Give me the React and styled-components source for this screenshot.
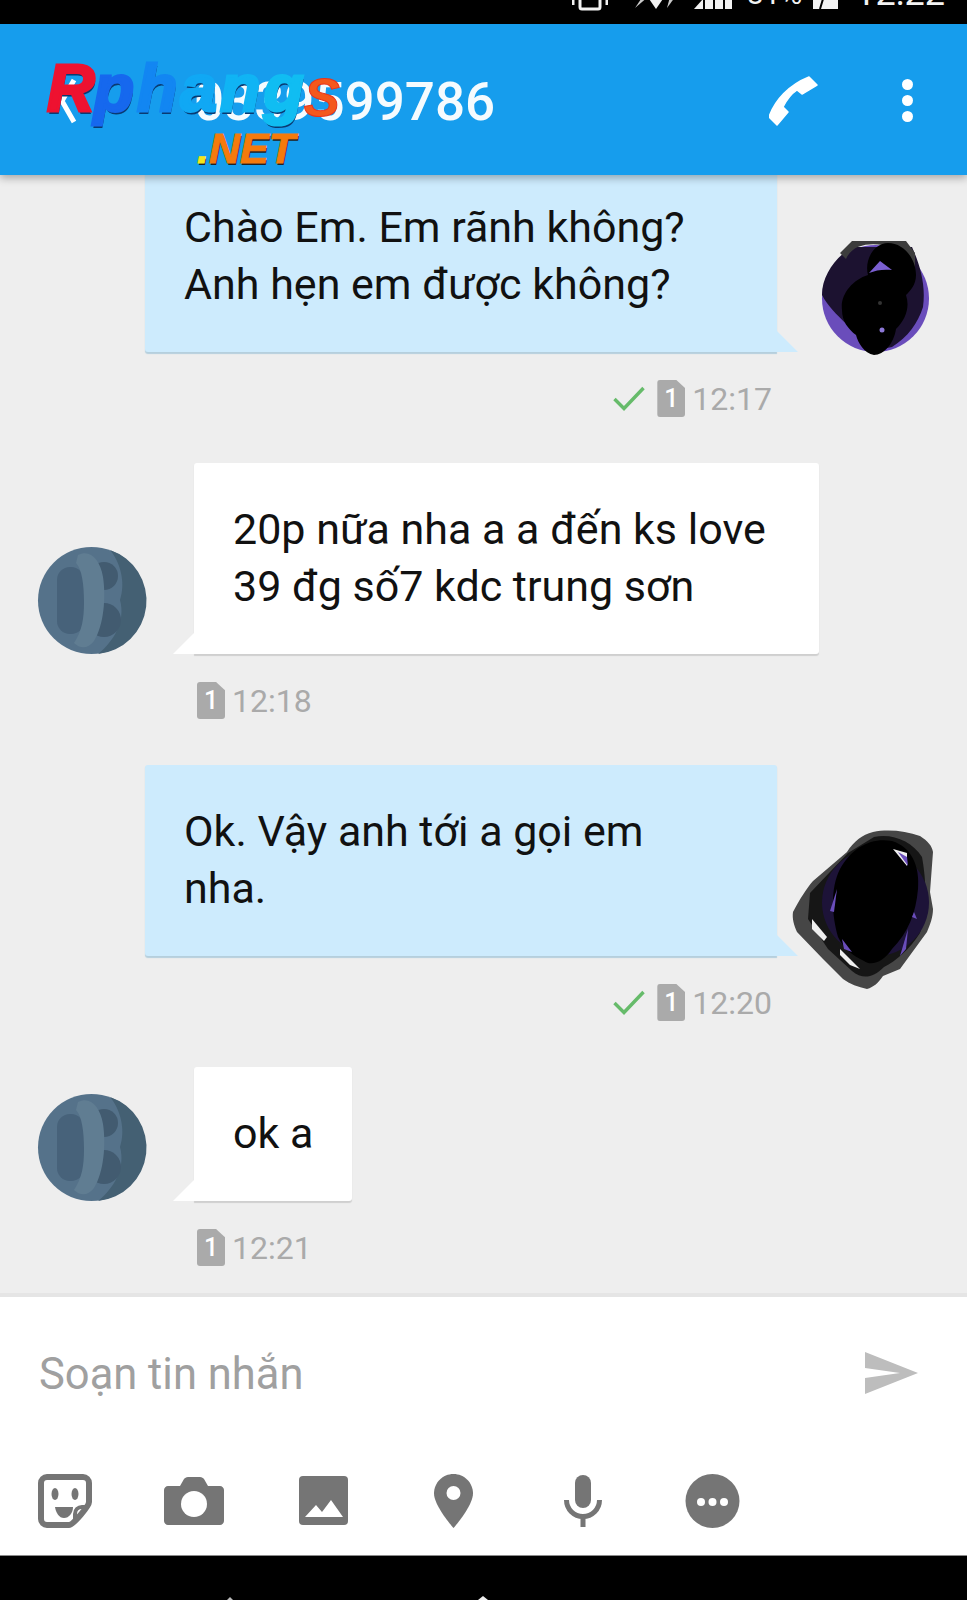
import React from 'react';
import styled, { createGlobalStyle } from 'styled-components';

const GlobalStyle = createGlobalStyle`
    html, body {
        margin: 0;
        padding: 0;
        background: #000;
    }
    * {
        box-sizing: border-box;
    }
`;

const Screen = styled.div`
    width: 967px;
    height: 1600px;
    display: flex;
    flex-direction: column;
    overflow: hidden;
    font-family: Roboto, "Noto Sans", sans-serif;
    background: #eeeeee;
`;

const StatusBar = styled.div`
    height: 24px;
    flex: none;
    background: #000;
    color: #f2f2f2;
    display: flex;
    justify-content: flex-end;
    align-items: flex-end;
    overflow: hidden;
    padding: 0 22px 13px 0;
`;

const StatusIcon = styled.svg`
    flex: none;
    margin-right: ${(p) => p.$gap}px;
`;

const StatusText = styled.span`
    font-size: ${(p) => p.$size}px;
    line-height: 1;
    margin-right: ${(p) => p.$gap || 0}px;
    margin-bottom: ${(p) => p.$drop || 0}px;
`;

const AppBar = styled.header`
    position: relative;
    z-index: 2;
    height: 151px;
    flex: none;
    display: flex;
    align-items: center;
    padding: 2px 54px 0 59px;
    background: #169ded;
    box-shadow: 0 3px 8px rgba(0, 0, 0, 0.3);
    color: #fff;
`;

const BackIcon = styled.svg`
    flex: none;
    margin-right: 116px;
`;

const Number = styled.h1`
    margin: 4px 0 0;
    flex: 1;
    font-size: 53px;
    font-weight: 500;
    line-height: 1;
    opacity: 0.96;
`;

const PhoneIcon = styled.svg`
    flex: none;
    margin-right: 83px;
`;

const Menu = styled.div`
    display: flex;
    flex-direction: column;
    gap: 5px;
`;

const Dot = styled.span`
    width: 11px;
    height: 11px;
    border-radius: 50%;
    background: #fff;
`;

const Logo = styled.div`
    position: absolute;
    left: 47px;
    top: 28px;
    display: flex;
    flex-direction: column;
    font-family: "Liberation Sans", Arial, sans-serif;
    font-weight: 700;
    font-style: italic;
`;

const LogoTop = styled.div`
    display: flex;
    align-items: baseline;
    font-size: 66px;
    line-height: 72px;
`;

const LogoLetter = styled.span`
    color: ${(p) => p.$color};
    -webkit-text-stroke: 3px ${(p) => p.$color};
    text-shadow: 1px 3px 0 #0a3a72;
    margin-right: ${(p) => p.$gap ?? 3}px;
`;

const LogoEnd = styled.span`
    color: #f4581c;
    font-size: 54px;
    margin-left: -3px;
    position: relative;
    top: 5px;
    -webkit-text-stroke: 1px #e8331c;
`;

const LogoNet = styled.div`
    margin: -2px 0 0 150px;
    font-size: 43px;
    line-height: 44px;
    color: #f57a0c;
    -webkit-text-stroke: 1px #f57a0c;
    text-shadow: 1px 2px 0 #222;
`;

const LogoDot = styled.span`
    color: #f4e61c;
    -webkit-text-stroke: 1px #f4e61c;
`;

const Chat = styled.main`
    flex: 1;
    min-height: 0;
    display: flex;
    flex-direction: column;
    justify-content: flex-end;
    overflow: hidden;
    padding-bottom: 27px;
`;

const Row = styled.div`
    flex: none;
    display: flex;
    align-items: flex-end;
    padding-left: ${(p) => (p.$mine ? 145 : 38)}px;
    gap: ${(p) => (p.$mine ? 45 : 49)}px;
`;

const Bubble = styled.div`
    position: relative;
    width: ${(p) => (p.$wide ? `${p.$wide}px` : 'auto')};
    padding: 38px 39px 39px;
    font-size: 43px;
    line-height: 57px;
    color: #111;
    background: ${(p) => (p.$mine ? '#cdebfd' : '#fff')};
    border-radius: ${(p) => (p.$mine ? '3px 3px 0 3px' : '3px 3px 3px 0')};
    box-shadow: 0 1.5px 1px ${(p) => (p.$mine ? '#b5cfdd' : '#cfcfcf')};

    &::after {
        content: '';
        position: absolute;
        bottom: 0;
        width: 21px;
        height: 21px;
        background: inherit;
        ${(p) =>
            p.$mine
                ? 'left: 100%; clip-path: polygon(0 0, 100% 100%, 0 100%);'
                : 'right: 100%; clip-path: polygon(100% 0, 0 100%, 100% 100%);'}
    }
`;

const AvatarSlot = styled.div`
    position: relative;
    width: 107px;
    height: 107px;
    flex: none;
`;

const AvatarArt = styled.svg`
    display: block;
    overflow: visible;
`;

const Meta = styled.div`
    flex: none;
    height: 37px;
    margin: 28px 0 46px;
    display: flex;
    align-items: center;
    justify-content: ${(p) => (p.$mine ? 'flex-end' : 'flex-start')};
    padding: ${(p) => (p.$mine ? '0 195px 0 0' : '0 0 0 197px')};
    color: #aaaaaa;
    font-size: 32px;

    &:last-child {
        margin-bottom: 0;
    }
`;

const Check = styled.svg`
    flex: none;
    margin-right: 12px;
`;

const SimBadge = styled.span`
    width: 28px;
    height: 37px;
    margin-right: 7px;
    display: flex;
    align-items: center;
    justify-content: center;
    font-size: 25px;
    font-weight: 500;
    color: #fff;
    background: #aaaaaa;
    border-radius: 3px;
    clip-path: polygon(0 0, 68% 0, 100% 22%, 100% 100%, 0 100%);
`;

const Composer = styled.footer`
    flex: none;
    background: #fff;
    border-top: 4px solid #e5e5e5;
`;

const InputRow = styled.div`
    height: 153px;
    display: flex;
    align-items: center;
    justify-content: space-between;
    padding: 2px 49px 0 39px;
`;

const Placeholder = styled.span`
    font-size: 43.5px;
    color: #a0a0a0;
`;

const SendIcon = styled.svg`
    flex: none;
    margin-bottom: 4px;
`;

const Tools = styled.div`
    height: 105px;
    padding-bottom: 4px;
    display: grid;
    grid-template-columns: repeat(6, 129.6px);
    align-items: center;
    justify-items: center;
`;

const NavBar = styled.nav`
    flex: none;
    height: 45px;
    display: flex;
    align-items: flex-end;
    gap: 236px;
    padding-left: 224px;
    background: #000;
    border-top: 1px solid #8a8a8a;
`;

const NavTip = styled.svg`
    flex: none;
    display: block;
`;

const GREY = '#757575';

function SelfAvatar() {
    return (
        <AvatarSlot>
            <AvatarArt width="107" height="107" viewBox="0 0 107 107">
                <circle cx="53.5" cy="53.5" r="53.5" fill="#6a4dbb" />
                <path d="M0 50C0 30 14 12 30 2L90 2C98 20 104 40 101 62C96 78 86 92 70 102L50 106C40 90 10 70 0 50Z" fill="#1c1230" />
                <path d="M18 8L30 -4H84L93 8V26C88 8 74 -2 60 0C46 -2 30 0 24 14Z" fill="#3c3c3c" />
                <path d="M20 65C18 50 30 35 46 30C42 15 52 -2 66 -2C82 -2 94 14 94 30C94 40 88 46 84 50C88 62 84 74 74 84C72 98 62 110 52 110C42 108 36 98 34 90C26 84 20 76 20 65Z" fill="#000" />
                <path d="M47 28L58 16L70 25C62 24 54 25 47 28Z" fill="#7a5fd0" />
                <circle cx="58" cy="58" r="2" fill="#333" />
                <circle cx="60" cy="85" r="2.5" fill="#8d78d8" />
            </AvatarArt>
        </AvatarSlot>
    );
}

function ScribbleAvatar() {
    return (
        <AvatarSlot>
            <AvatarArt width="107" height="107" viewBox="0 0 107 107">
                <path d="M-29 63C-22 50 -16 40 -9 32L25 3C32 -8 40 -14 51 -17C66 -20 84 -18 98 -13C106 -8 110 -3 111 3L108 43L111 60C111 68 108 76 105 83L78 120L61 127C56 134 52 138 45 140C36 138 28 135 21 130L1 110L-25 83C-28 76 -30 70 -29 63Z" fill="#464646" />
                <path d="M-12 44L26 4L52 -12C70 -16 90 -8 100 8C104 30 106 60 98 84C88 100 74 112 62 118C50 130 40 130 30 122L6 100L-14 70Z" fill="#161616" />
                <circle cx="53.5" cy="53.5" r="53.5" fill="#1d1338" />
                <path d="M18 20C30 -2 50 -12 70 -8C90 -2 98 18 96 40C94 64 86 84 70 100C62 112 50 118 42 112C30 106 22 100 16 88C10 66 8 40 18 20Z" fill="#000" />
                <path d="M-10 70L5 88L2 92L-10 80Z" fill="#efefef" />
                <path d="M18 100L38 120L28 116L18 106Z" fill="#efefef" />
                <path d="M20 90L30 103L22 100Z" fill="#6a4dbb" />
                <path d="M15 40L8 62L12 63Z" fill="#6a4dbb" />
                <path d="M71 0L85 4L85 17Z" fill="#efefef" />
                <path d="M76 3L85 8L86 17Z" fill="#6a4dbb" />
                <path d="M86 80L78 107L84 100Z" fill="#6a4dbb" />
                <path d="M92 63L95 70L90 68Z" fill="#6a4dbb" />
            </AvatarArt>
        </AvatarSlot>
    );
}

function ContactAvatar() {
    return (
        <AvatarSlot>
            <AvatarArt width="107" height="107" viewBox="0 0 107 107">
                <circle cx="53.5" cy="53.5" r="53.5" fill="#55728a" />
                <path d="M72 3A53.5 53.5 0 0 1 60 107C75 95 88 75 82 53C88 35 82 15 72 3Z" fill="#446073" />
                <rect x="19" y="20" width="27" height="67" rx="13" fill="#47627a" />
                <circle cx="66" cy="29" r="14" fill="#425b70" />
                <circle cx="66" cy="73" r="17" fill="#425b70" />
                <path d="M40 8C52 2 62 12 65 30C68 50 66 78 56 94C50 102 42 102 36 96C44 84 46 72 46 55C46 38 44 22 38 16Z" fill="#607d92" />
            </AvatarArt>
        </AvatarSlot>
    );
}

function Stamp({ mine, time }) {
    return (
        <Meta $mine={mine}>
            {mine && (
                <Check width="32" height="25" viewBox="0 0 32 25">
                    <polyline points="1.5,13 11,22.5 30.5,2" fill="none" stroke="#66bb6a" strokeWidth="3.4" />
                </Check>
            )}
            <SimBadge>1</SimBadge>
            {time}
        </Meta>
    );
}

export default function App() {
    return (
        <Screen>
            <GlobalStyle />
            <StatusBar>
                <StatusIcon $gap={27} width="36" height="30" viewBox="0 0 36 30">
                    <rect x="8" y="2" width="20" height="26" rx="2" fill="none" stroke="#f2f2f2" strokeWidth="3" />
                    <path d="M1 14V24M35 14V24" stroke="#f2f2f2" strokeWidth="3" />
                </StatusIcon>
                <StatusIcon $gap={16} width="43" height="30" viewBox="0 0 43 30">
                    <path d="M0 27L8 15H14Z" fill="#c9c9c9" />
                    <path d="M10 12H32L21 28Z" fill="#f2f2f2" />
                    <path d="M32 27L43 12H36Z" fill="#c9c9c9" />
                </StatusIcon>
                <StatusIcon $gap={15} width="38" height="30" viewBox="0 0 38 30">
                    <path d="M0 28L9 18V28Z" fill="#f2f2f2" />
                    <rect x="11" y="8" width="8" height="20" fill="#f2f2f2" />
                    <rect x="21" y="4" width="8" height="24" fill="#f2f2f2" />
                    <rect x="31" y="0" width="7" height="28" fill="#f2f2f2" />
                </StatusIcon>
                <StatusText $size={30} $gap={11} $drop={2}>81%</StatusText>
                <StatusIcon $gap={17} width="25" height="30" viewBox="0 0 25 30">
                    <rect width="25" height="28" fill="#f2f2f2" />
                    <path d="M12 4L4 18H10L7 28" fill="none" stroke="#000" strokeWidth="2" />
                </StatusIcon>
                <StatusText $size={36}>12:22</StatusText>
            </StatusBar>

            <AppBar>
                <BackIcon width="19" height="46" viewBox="0 0 19 46">
                    <polyline points="15,2 3,23 15,44" fill="none" stroke="#fff" strokeWidth="5" />
                </BackIcon>
                <Number>0339599786</Number>
                <PhoneIcon width="50" height="50" viewBox="0 0 50 50">
                    <path d="M40 1L48 9L33 18L28 14C22 18 17 25 14 31L19 36L8 49L0 41C6 24 20 9 40 1Z" fill="#fff" stroke="#fff" strokeWidth="1.5" strokeLinejoin="round" />
                </PhoneIcon>
                <Menu>
                    <Dot />
                    <Dot />
                    <Dot />
                </Menu>
                <Logo>
                    <LogoTop>
                        <LogoLetter $color="#ee1230" $gap={-1}>R</LogoLetter>
                        <LogoLetter $color="#1668ee">p</LogoLetter>
                        <LogoLetter $color="#1286f2">h</LogoLetter>
                        <LogoLetter $color="#10a8f4">a</LogoLetter>
                        <LogoLetter $color="#10b4f4">n</LogoLetter>
                        <LogoLetter $color="#10bdf2">g</LogoLetter>
                        <LogoEnd>S</LogoEnd>
                    </LogoTop>
                    <LogoNet><LogoDot>.</LogoDot>NET</LogoNet>
                </Logo>
            </AppBar>

            <Chat>
                <Row $mine>
                    <Bubble $mine $wide={632}>Chào Em. Em rãnh không?<br />Anh hẹn em được không?</Bubble>
                    <SelfAvatar />
                </Row>
                <Stamp mine time="12:17" />
                <Row>
                    <ContactAvatar />
                    <Bubble $wide={625}>20p nữa nha a a đến ks love<br />39 đg số7 kdc trung sơn</Bubble>
                </Row>
                <Stamp time="12:18" />
                <Row $mine>
                    <Bubble $mine $wide={632}>Ok. Vậy anh tới a gọi em<br />nha.</Bubble>
                    <ScribbleAvatar />
                </Row>
                <Stamp mine time="12:20" />
                <Row>
                    <ContactAvatar />
                    <Bubble>ok a</Bubble>
                </Row>
                <Stamp time="12:21" />
            </Chat>

            <Composer>
                <InputRow>
                    <Placeholder>Soạn tin nhắn</Placeholder>
                    <SendIcon width="53" height="42" viewBox="0 0 53 42">
                        <polygon points="0,0 53,21 0,42 0,26 35,21 0,16" fill="#bdbdbd" />
                    </SendIcon>
                </InputRow>
                <Tools>
                    <svg width="54" height="54" viewBox="0 0 54 54">
                        <path d="M3 9A6 6 0 0 1 9 3H45A6 6 0 0 1 51 9V28C51 32 35 51 31 51H9A6 6 0 0 1 3 45Z" fill="none" stroke={GREY} strokeWidth="6" />
                        <path d="M50 33H44C40 33 37 36 37 40V49" fill="none" stroke={GREY} strokeWidth="4" />
                        <ellipse cx="17" cy="20" rx="3.5" ry="6" fill={GREY} />
                        <ellipse cx="37" cy="20" rx="3.5" ry="6" fill={GREY} />
                        <path d="M17 33H35C35 39 31 44 26 44C21 44 18 39 17 33Z" fill={GREY} />
                    </svg>
                    <svg width="60" height="48" viewBox="0 0 60 48">
                        <path d="M4 9H16L20 2C21 1 22 0 24 0H36C38 0 39 1 40 2L44 9H56C58 9 60 11 60 13V44C60 46 58 48 56 48H4C2 48 0 46 0 44V13C0 11 2 9 4 9Z" fill={GREY} />
                        <circle cx="30" cy="27" r="13" fill="#fff" />
                    </svg>
                    <svg width="49" height="49" viewBox="0 0 49 49">
                        <rect width="49" height="49" rx="4" fill={GREY} />
                        <polygon points="6,41 17,29 23,36 32,24 44,41" fill="#fff" />
                    </svg>
                    <svg width="39" height="54" viewBox="0 0 39 54">
                        <path d="M19.5 0C8.7 0 0 8.7 0 19.5C0 32 19.5 54 19.5 54S39 32 39 19.5C39 8.7 30.3 0 19.5 0Z" fill={GREY} />
                        <circle cx="19.5" cy="19" r="7" fill="#fff" />
                    </svg>
                    <svg width="38" height="52" viewBox="0 0 38 52">
                        <rect x="11" y="0" width="16" height="33" rx="8" fill={GREY} />
                        <path d="M2.5 25A16.5 16.5 0 0 0 35.5 25" fill="none" stroke={GREY} strokeWidth="5" />
                        <rect x="16.5" y="41" width="5" height="11" fill={GREY} />
                    </svg>
                    <svg width="55" height="54" viewBox="0 0 55 54">
                        <circle cx="27.5" cy="27" r="27" fill={GREY} />
                        <circle cx="16" cy="28" r="4" fill="#fff" />
                        <circle cx="27.5" cy="28" r="4" fill="#fff" />
                        <circle cx="39" cy="28" r="4" fill="#fff" />
                    </svg>
                </Tools>
            </Composer>

            <NavBar>
                <NavTip width="12" height="3" viewBox="0 0 12 3">
                    <path d="M3 3L6 0L9 3Z" fill="#bbb" />
                </NavTip>
                <NavTip width="22" height="4" viewBox="0 0 22 4">
                    <path d="M6 4L11 0L16 4Z" fill="#eee" />
                </NavTip>
            </NavBar>
        </Screen>
    );
}
